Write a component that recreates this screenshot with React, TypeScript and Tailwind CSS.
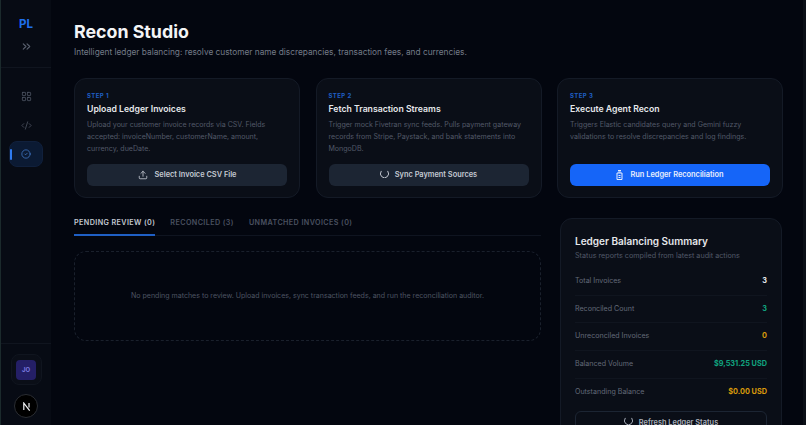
import React from "react";
import { ChevronsRight, LayoutGrid, CodeXml, CircleCheck, Upload } from "lucide-react";

const font = { fontFamily: "Inter, 'Liberation Sans', sans-serif" };

function Spinner() {
  return (
    <svg width="9" height="9" viewBox="0 0 24 24" fill="none" stroke="currentColor" strokeWidth="2.6" strokeLinecap="round" className="mb-[4px]">
      <path d="M3 6a11 11 0 1 0 18 0" />
    </svg>
  );
}

function StepCard({ step, title, body, children }: { step: string; title: string; body: string; children: React.ReactNode }) {
  return (
    <div className="flex h-[120px] flex-col rounded-xl border border-[#141a26] bg-[#0a0e17] px-[12px] pt-[12px] pb-[11px]">
      <div className="text-[6px] leading-[9px] font-bold tracking-[0.4px] text-[#1f5fc4]">{step}</div>
      <div className="mt-[2px] text-[8.7px] leading-[14px] font-semibold text-[#e5e7eb]">{title}</div>
      <p className="mt-[3px] flex-1 text-[7.05px] leading-[12.2px] text-[#525968]">{body}</p>
      {children}
    </div>
  );
}

function Stat({ label, value, color, last }: { label: string; value: string; color: string; last?: boolean }) {
  return (
    <div className={`flex h-[27.7px] items-center justify-between ${last ? "" : "border-b border-[#10151f]"}`}>
      <span className="text-[7.1px] text-[#636a78]">{label}</span>
      <span className={`text-[7.3px] font-bold ${color}`}>{value}</span>
    </div>
  );
}

export default function App() {
  return (
    <div className="flex h-[425px] w-[806px] overflow-hidden bg-[#03060f]" style={font}>
      {/* Sidebar */}
      <aside className="flex h-full w-[51px] shrink-0 flex-col border-l border-l-[#1b2a2c] bg-[#070b14]">
        <div className="flex h-[68px] flex-col items-center border-b border-[#10151f] pt-[17px]">
          <span className="text-[11.5px] leading-[15px] font-bold text-[#1f6feb]">PL</span>
          <ChevronsRight className="mt-[8px] h-[13px] w-[13px] text-[#5b6270]" />
        </div>
        <nav className="flex flex-1 flex-col items-center gap-[3px] pt-[15px]">
          <div className="flex h-[26px] items-center justify-center">
            <LayoutGrid className="h-[11px] w-[11px] text-[#5b6270]" strokeWidth={1.5} />
          </div>
          <div className="flex h-[26px] items-center justify-center">
            <CodeXml className="h-[11px] w-[11px] text-[#5b6270]" strokeWidth={1.5} />
          </div>
          <div className="relative flex h-[26px] w-[34px] items-center justify-center rounded-lg border border-[#10203c] bg-[#0b1a33]">
            <span className="absolute top-[7px] left-0 h-[11px] w-[2px] rounded-full bg-[#2f7bf0]" />
            <CircleCheck className="h-[10px] w-[10px] text-[#4f8fe8]" strokeWidth={1.5} />
          </div>
        </nav>
        <div className="flex h-[82px] flex-col items-center border-t border-[#10151f] pt-[10px]">
          <div className="flex h-[31px] w-[31px] items-center justify-center rounded-lg border border-[#10151f] bg-[#0a0e17]">
            <div className="flex h-[20px] w-[20px] items-center justify-center rounded-[4px] bg-[#241f66] text-[6px] font-bold text-[#7c7ce0]">JO</div>
          </div>
          <div className="mt-[9px] flex h-[24px] w-[24px] items-center justify-center rounded-full border border-[#2a2d33] bg-black">
            <svg width="9" height="9" viewBox="0 0 10 10" fill="none" stroke="#f3f4f6" strokeWidth="1.3">
              <path d="M2 9V1.2L8.5 9.5M7.8 1v5" />
            </svg>
          </div>
        </div>
      </aside>

      {/* Main */}
      <main className="min-w-0 flex-1 pt-[20px] pr-[20px] pl-[23px]">
        <h1 className="text-[17.8px] leading-[23px] font-bold text-[#f3f4f6]">Recon Studio</h1>
        <p className="mt-[3px] text-[8.3px] leading-[13px] text-[#747b88]">
          Intelligent ledger balancing: resolve customer name discrepancies, transaction fees, and currencies.
        </p>

        <div className="mt-[19px] grid grid-cols-3 gap-[15.5px]">
          <StepCard step="STEP 1" title="Upload Ledger Invoices" body="Upload your customer invoice records via CSV. Fields accepted: invoiceNumber, customerName, amount, currency, dueDate.">
            <button className="flex h-[22px] items-center justify-center gap-[7px] rounded-md bg-[#1c2533] text-[7.4px] font-semibold text-[#c4c9d2]">
              <Upload className="h-[10px] w-[10px]" /> Select Invoice CSV File
            </button>
          </StepCard>
          <StepCard step="STEP 2" title="Fetch Transaction Streams" body="Trigger mock Fivetran sync feeds. Pulls payment gateway records from Stripe, Paystack, and bank statements into MongoDB.">
            <button className="flex h-[22px] items-center justify-center gap-[6px] rounded-md bg-[#1c2533] text-[7.4px] font-semibold text-[#c4c9d2]">
              <Spinner /> Sync Payment Sources
            </button>
          </StepCard>
          <StepCard step="STEP 3" title="Execute Agent Recon" body="Triggers Elastic candidates query and Gemini fuzzy validations to resolve discrepancies and log findings.">
            <button className="flex h-[22px] items-center justify-center gap-[7px] rounded-md bg-[#1565f8] text-[7.4px] font-semibold text-[#e8eefc]">
              <svg width="7" height="10" viewBox="0 0 7 10" fill="none" stroke="currentColor" strokeWidth="1">
                <path d="M2 .5h3M2.2 2h2.6M1 3h5v6.500H1zM2.500 5.500h2M2.500 7.500h2" />
              </svg>
              Run Ledger Reconciliation
            </button>
          </StepCard>
        </div>

        <div className="mt-[19px] grid grid-cols-[467px_222px] justify-between pr-[1px]">
          <div>
            <div className="flex gap-[15px] border-b border-[#0f1420] text-[7.2px] leading-[10px] font-semibold tracking-[0.4px]">
              <div className="-mb-px border-b-2 border-[#1f5fc4] pt-[1px] pb-[6px] text-[#c4c9d2]">PENDING REVIEW (0)</div>
              <div className="pt-[1px] text-[#4a5160]">RECONCILED (3)</div>
              <div className="pt-[1px] text-[#4a5160]">UNMATCHED INVOICES (0)</div>
            </div>
            <div className="mt-[15px] flex h-[90px] items-center justify-center rounded-xl border border-dashed border-[#1a202c] text-[7.05px] text-[#4d5462]">
              No pending matches to review. Upload invoices, sync transaction feeds, and run the reconciliation auditor.
            </div>
          </div>
          <div className="mt-[1px] h-[230px] rounded-xl border border-[#141a26] bg-[#0a0e17] px-[14px] pt-[15px]">
            <div className="text-[10px] leading-[14px] font-semibold text-[#e5e7eb]">Ledger Balancing Summary</div>
            <div className="mt-[2px] text-[7.2px] leading-[12px] text-[#525968]">Status reports compiled from latest audit actions</div>
            <div className="mt-[6px]">
              <Stat label="Total Invoices" value="3" color="text-[#e5e7eb]" />
              <Stat label="Reconciled Count" value="3" color="text-[#10a37f]" />
              <Stat label="Unreconciled Invoices" value="0" color="text-[#d99a0b]" />
              <Stat label="Balanced Volume" value="$9,531.25 USD" color="text-[#10a37f]" />
              <Stat label="Outstanding Balance" value="$0.00 USD" color="text-[#d99a0b]" last />
            </div>
            <button className="mt-[5px] flex h-[22px] w-full items-center justify-center gap-[6px] rounded-md border border-[#1c2533] text-[7.4px] font-semibold text-[#a9afba]">
              <Spinner /> Refresh Ledger Status
            </button>
          </div>
        </div>
      </main>
      <div className="h-full w-[3px] shrink-0 bg-[#0b0f17]" />
    </div>
  );
}
